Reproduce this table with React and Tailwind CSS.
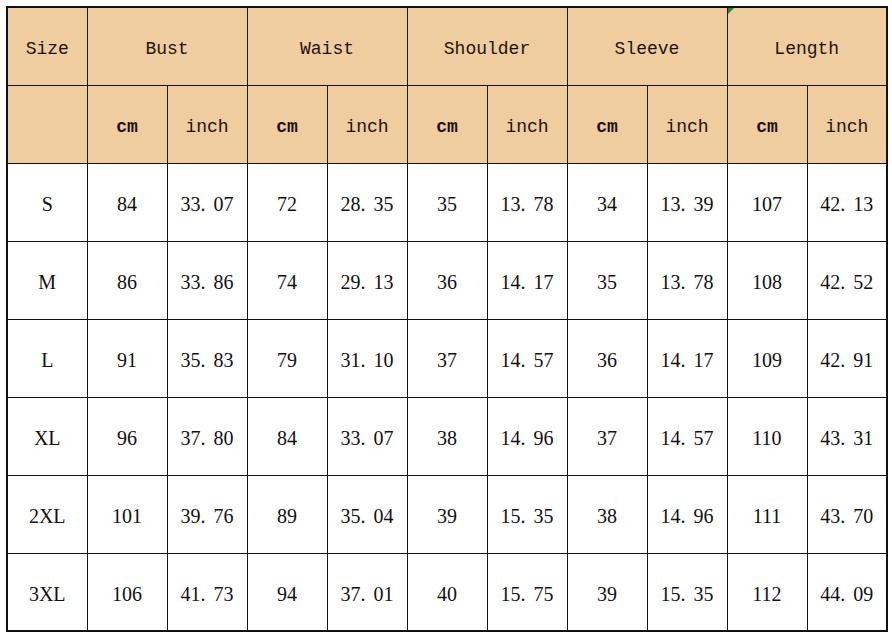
import React from 'react';

const groups = ['Bust', 'Waist', 'Shoulder', 'Sleeve', 'Length'];

const rows = [
  ['S', '84', '33.07', '72', '28.35', '35', '13.78', '34', '13.39', '107', '42.13'],
  ['M', '86', '33.86', '74', '29.13', '36', '14.17', '35', '13.78', '108', '42.52'],
  ['L', '91', '35.83', '79', '31.10', '37', '14.57', '36', '14.17', '109', '42.91'],
  ['XL', '96', '37.80', '84', '33.07', '38', '14.96', '37', '14.57', '110', '43.31'],
  ['2XL', '101', '39.76', '89', '35.04', '39', '15.35', '38', '14.96', '111', '43.70'],
  ['3XL', '106', '41.73', '94', '37.01', '40', '15.75', '39', '15.35', '112', '44.09'],
];

// the decimal point in the original is drawn wide, like a half-width CJK glyph
const Num = ({ value }) => {
  const [a, b] = value.split('.');
  if (b === undefined) return value;
  return (
    <>
      {a}
      <span className="inline-block w-[13px] text-left">.</span>
      {b}
    </>
  );
};

const headCell = 'border border-[#111] bg-[#efcd9f] text-center text-[18px] text-[#1c140c] pt-[6px]';
const bodyCell = 'border border-[#111] text-center text-[20px] text-[#111] pt-[4px]';

export default function App() {
  return (
    <div className="w-[892px] h-[637px] bg-white pt-[6px] pl-[6px]">
      <table className="table-fixed border-collapse border-2 border-[#111] w-[882px]">
        <tbody>
          <tr className="h-[78px] font-['Liberation_Mono',monospace]">
            <td className={`${headCell} w-[80px]`}>Size</td>
            {groups.map((g) => (
              <td key={g} colSpan={2} className={`${headCell} relative`}>
                {g === 'Length' && (
                  // spreadsheet marker left in the corner of this cell
                  <svg className="absolute left-0 top-0" width="6" height="6" viewBox="0 0 6 6">
                    <polygon points="0,0 6,0 0,6" fill="#1f8a3a" />
                  </svg>
                )}
                {g}
              </td>
            ))}
          </tr>
          <tr className="h-[78px] font-['Liberation_Mono',monospace]">
            <td className={headCell}></td>
            {groups.map((g) => (
              <React.Fragment key={g}>
                <td className={`${headCell} w-[80px] font-bold`}>cm</td>
                <td className={`${headCell} w-[80px]`}>inch</td>
              </React.Fragment>
            ))}
          </tr>
          {rows.map((r) => (
            <tr key={r[0]} className="h-[78px] font-['Liberation_Serif',serif]">
              {r.map((v, i) => (
                <td key={i} className={`${bodyCell} ${i === 0 ? 'text-[18px]' : ''}`}>
                  <Num value={v} />
                </td>
              ))}
            </tr>
          ))}
        </tbody>
      </table>
    </div>
  );
}
